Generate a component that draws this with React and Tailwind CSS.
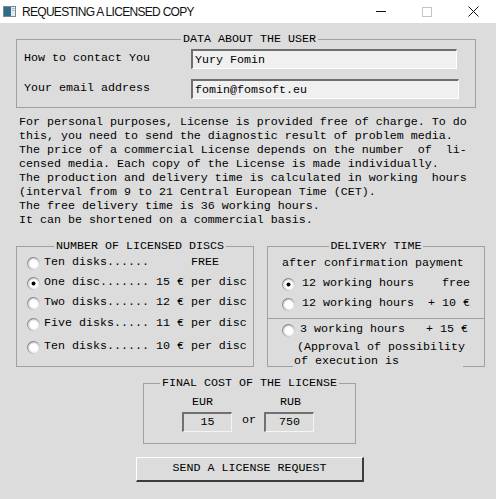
import React from 'react';

const MONO = "font-['Liberation_Mono','Courier_New',monospace]";

function Radio({ checked }) {
    return (
        <svg width="13" height="13" viewBox="0 0 13 13" className="shrink-0">
            <defs>
                <linearGradient id="rOuter" x1="0" y1="0" x2="1" y2="1">
                    <stop offset="0" stopColor="#707070" />
                    <stop offset="0.55" stopColor="#a8a8a8" />
                    <stop offset="1" stopColor="#f6f6f6" />
                </linearGradient>
                <linearGradient id="rInner" x1="0" y1="0" x2="1" y2="1">
                    <stop offset="0" stopColor="#b4b4b4" />
                    <stop offset="1" stopColor="#ffffff" />
                </linearGradient>
            </defs>
            <circle cx="6.5" cy="6.5" r="5.9" fill="#fff" stroke="url(#rOuter)" strokeWidth="1.1" />
            <circle cx="6.5" cy="6.5" r="4.7" fill="none" stroke="url(#rInner)" strokeWidth="0.9" />
            {checked && <circle cx="6.5" cy="6.5" r="2" fill="#000" />}
        </svg>
    );
}

function Group({ title, className, children }) {
    return (
        <fieldset className={`border border-[#a0a0a0] box-border ${className}`}>
            <legend className="mx-auto px-[2px] leading-[14px]">{title}</legend>
            {children}
        </fieldset>
    );
}

function Field({ value, width }) {
    return (
        <div
            className={`h-[20px] bg-[#f0f0f0] border-t-2 border-l-2 border-t-[#6e6e6e] border-l-[#6e6e6e] border-b border-r border-b-white border-r-white pl-[2px] leading-[18px] ${width}`}
        >
            {value}
        </div>
    );
}

export default function App() {
    const discs = [
        { label: 'Ten disks......      FREE', mt: 'mt-0', w: '' },
        { label: 'One disc....... 15 € per disc', mt: 'mt-0', w: '', checked: true },
        { label: 'Two disks...... 12 € per disc', mt: 'mt-0', w: '' },
        { label: 'Five disks..... 11 € per disc', mt: 'mt-[1px]', w: '' },
        { label: 'Ten disks...... 10 € per disc', mt: 'mt-[3px]', w: 'w-[202px] overflow-hidden' },
    ];

    return (
        <div className={`w-[496px] h-[499px] bg-[#dcdcdc] overflow-hidden text-[11.67px] text-black ${MONO}`}>
            {/* title bar */}
            <div className="h-[23px] bg-white flex items-center font-['Liberation_Sans',Arial,sans-serif]">
                <svg width="13" height="11" viewBox="0 0 13 11" className="ml-[3px]">
                    <rect x="0.5" y="0.5" width="12" height="10" fill="#e4eaef" stroke="#7d8891" />
                    <rect x="1" y="1" width="7" height="9" fill="#2f6d8e" />
                    <rect x="9" y="2" width="2.5" height="1" fill="#9fb3c2" />
                    <rect x="9" y="4" width="2.5" height="1" fill="#9fb3c2" />
                </svg>
                <span className="ml-[6px] text-[12px] tracking-[-0.7px] text-[#111]">REQUESTING A LICENSED COPY</span>
                <div className="ml-auto flex h-full">
                    <div className="w-[46px] flex items-center justify-center">
                        <div className="w-[10px] h-px bg-[#111]" />
                    </div>
                    <div className="w-[46px] flex items-center justify-center">
                        <div className="w-[10px] h-[10px] border border-[#c4c4c4]" />
                    </div>
                    <div className="w-[46px] flex items-center justify-center">
                        <svg width="11" height="11" viewBox="0 0 11 11">
                            <path d="M0.5 0.5 L10.5 10.5 M10.5 0.5 L0.5 10.5" stroke="#111" strokeWidth="1" />
                        </svg>
                    </div>
                </div>
            </div>

            {/* user data */}
            <Group title="DATA ABOUT THE USER" className="mt-[9px] ml-[16px] w-[460px] pl-[7px] pt-[3px] pb-[8px]">
                <div className="flex items-center">
                    <span className="w-[167px] whitespace-pre">How to contact You</span>
                    <Field value="Yury Fomin" width="w-[266px]" />
                </div>
                <div className="flex items-center mt-[10px]">
                    <span className="w-[167px] whitespace-pre">Your email address</span>
                    <Field value="fomin@fomsoft.eu" width="w-[268px]" />
                </div>
            </Group>

            {/* description */}
            <div className="ml-[19px] mt-[7px] leading-[14px] whitespace-pre">
                {[
                    'For personal purposes, License is provided free of charge. To do',
                    'this, you need to send the diagnostic result of problem media.',
                    'The price of a commercial License depends on the number  of  li-',
                    'censed media. Each copy of the License is made individually.',
                    'The production and delivery time is calculated in working  hours',
                    '(interval from 9 to 21 Central European Time (CET).',
                    'The free delivery time is 36 working hours.',
                    'It can be shortened on a commercial basis.',
                ].map(l => (
                    <div key={l}>{l}</div>
                ))}
            </div>

            {/* discs + delivery */}
            <div className="flex mt-[12px] ml-[16px] gap-[13px]">
                <Group title="NUMBER OF LICENSED DISCS" className="w-[238px] h-[128px] pl-[10px]">
                    {discs.map(d => (
                        <div key={d.label} className={`flex items-center h-[20px] ${d.mt}`}>
                            <Radio checked={d.checked} />
                            <span className={`ml-[4px] whitespace-pre ${d.w}`}>{d.label}</span>
                        </div>
                    ))}
                </Group>

                <Group title="DELIVERY TIME" className="w-[218px] h-[128px]">
                    <div className="pl-[14px] h-[20px] leading-[20px] whitespace-pre">after confirmation payment</div>
                    <div className="pl-[14px] flex items-center h-[20px] mt-[1px]">
                        <Radio checked />
                        <span className="ml-[7px] whitespace-pre">12 working hours    free</span>
                    </div>
                    <div className="pl-[14px] flex items-center h-[20px]">
                        <Radio />
                        <span className="ml-[7px] whitespace-pre">12 working hours  + 10 €</span>
                    </div>
                    <div className="border-t border-[#a0a0a0] mt-[4px]">
                        <div className="pl-[14px] flex items-center h-[20px] mt-[1px]">
                            <Radio />
                            <span className="ml-[5px] whitespace-pre">3 working hours   + 15 €</span>
                        </div>
                        <div className="relative ml-[25px] w-[170px] h-[34px] bg-[#dcdcdc] leading-[14px] whitespace-pre">
                            <div className="pl-[4px]">(Approval of possibility</div>
                            <div className="pl-[1px]">of execution is</div>
                        </div>
                    </div>
                </Group>
            </div>

            {/* final cost */}
            <Group title="FINAL COST OF THE LICENSE" className="mt-[9px] ml-[143px] w-[213px] h-[68px]">
                <div className="flex mt-[5px] leading-[14px]">
                    <span className="ml-[48px]">EUR</span>
                    <span className="ml-[67px]">RUB</span>
                </div>
                <div className="flex items-center mt-[3px] ml-[38px]">
                    <div className="w-[50px] h-[20px] border-t-2 border-l-2 border-t-[#707070] border-l-[#707070] border-b border-r border-b-[#f4f4f4] border-r-[#f4f4f4] flex items-center justify-center">
                        15
                    </div>
                    <span className="ml-[10px] mb-[3px]">or</span>
                    <div className="ml-[8px] w-[50px] h-[20px] border-t-2 border-l-2 border-t-[#707070] border-l-[#707070] border-b border-r border-b-[#f4f4f4] border-r-[#f4f4f4] flex items-center justify-center">
                        750
                    </div>
                </div>
            </Group>

            {/* send button */}
            <div className="mt-[13px] ml-[136px] w-[228px] h-[25px] border-t border-l border-t-white border-l-white border-b-2 border-r-2 border-b-[#3c3c3c] border-r-[#3c3c3c] bg-[#dcdcdc] flex items-center justify-center">
                SEND A LICENSE REQUEST
            </div>
        </div>
    );
}
